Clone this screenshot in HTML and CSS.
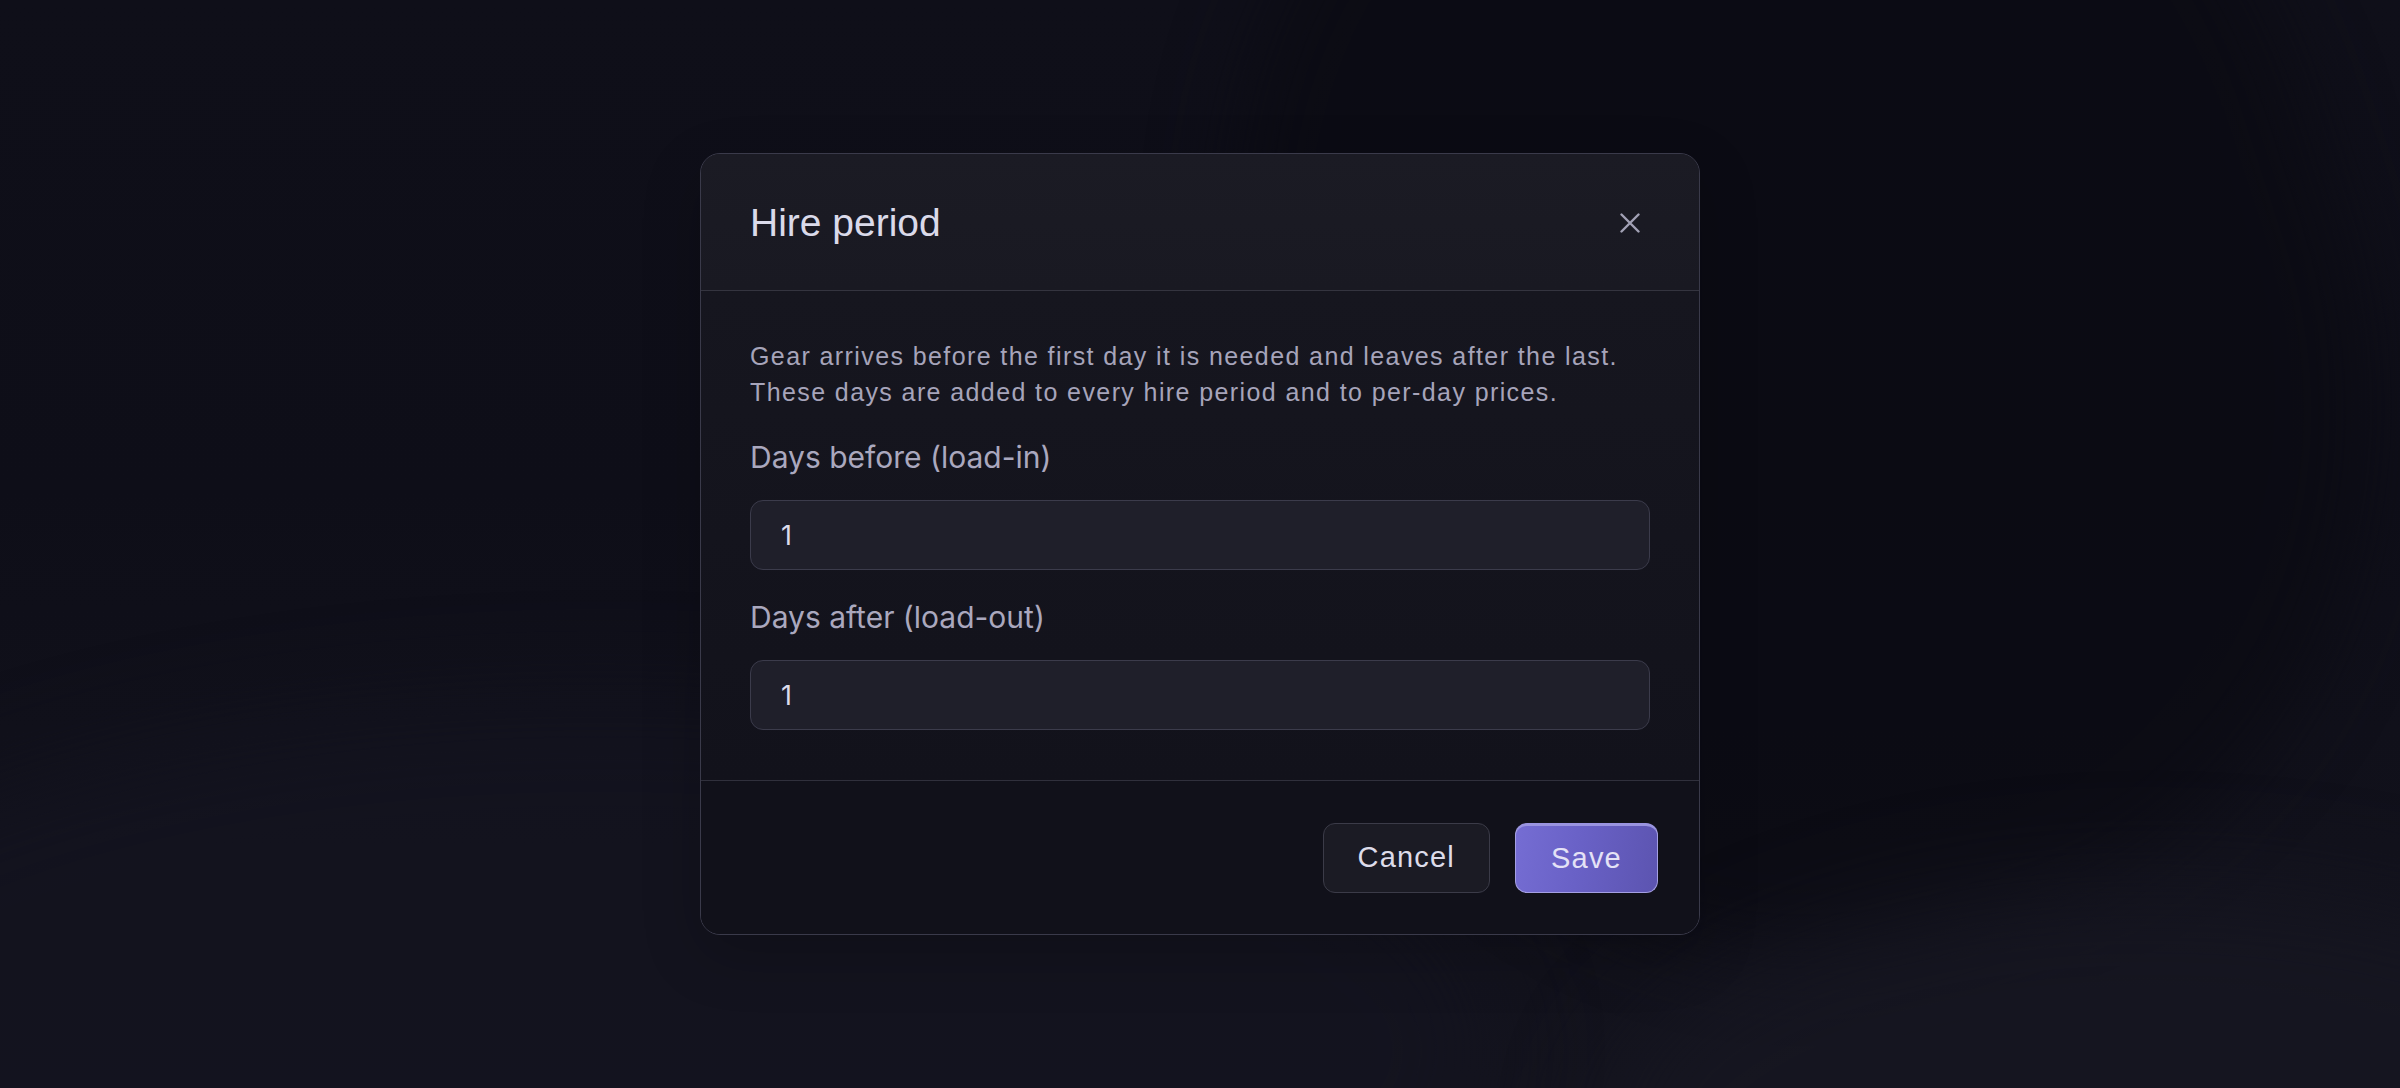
FILE: index.html
```html
<!DOCTYPE html>
<html lang="en">
<head>
<meta charset="utf-8">
<title>Hire period</title>
<link rel="stylesheet" href="styles.css">
</head>
<body>
<div class="backdrop">
  <div class="bg-shape bg-shape-dark"></div>
  <div class="bg-shape bg-shape-light"></div>
  <div class="bg-shape bg-shape-light2"></div>
  <div class="modal" role="dialog" aria-labelledby="mtitle">
    <div class="modal-header">
      <h2 class="modal-title" id="mtitle">Hire period</h2>
      <button class="close-btn" aria-label="Close">
        <svg width="20" height="20" viewBox="0 0 20 20" fill="none" stroke="currentColor" stroke-width="2.4" stroke-linecap="round"><path d="M1.5 1.5L18.5 18.5M18.5 1.5L1.5 18.5"/></svg>
      </button>
    </div>
    <div class="modal-body">
      <p class="desc">Gear arrives before the first day it is needed and leaves after the last.<br>These days are added to every hire period and to per-day prices.</p>
      <div class="field">
        <label class="field-label" for="before">Days before (load-in)</label>
        <input class="field-input" id="before" type="text" value="1">
      </div>
      <div class="field">
        <label class="field-label" for="after">Days after (load-out)</label>
        <input class="field-input" id="after" type="text" value="1">
      </div>
    </div>
    <div class="modal-footer">
      <button class="btn btn-secondary">Cancel</button>
      <button class="btn btn-primary">Save</button>
    </div>
  </div>
</div>
</body>
</html>
```
FILE: styles.css
```css
* { box-sizing: border-box; }
html, body { margin: 0; padding: 0; }
body {
  width: 2400px;
  height: 1088px;
  overflow: hidden;
  font-family: "Liberation Sans", Arial, sans-serif;
  background: linear-gradient(180deg, #0f0f19 0%, #0e0e18 45%, #13131d 100%);
}
.backdrop {
  position: relative;
  width: 2400px;
  height: 1088px;
  display: flex;
  align-items: center;
  justify-content: center;
  overflow: hidden;
}
.bg-shape {
  position: absolute;
  pointer-events: none;
}
.bg-shape-dark {
  left: 1250px;
  top: -300px;
  width: 1100px;
  height: 1250px;
  border-radius: 45%;
  background: #0b0b13;
  transform: rotate(-18deg);
  filter: blur(40px);
  opacity: 0.8;
}
.bg-shape-light {
  left: -300px;
  top: 700px;
  width: 1800px;
  height: 700px;
  border-radius: 50%;
  background: #141420;
  filter: blur(50px);
  opacity: 0.7;
}
.bg-shape-light2 {
  left: 1600px;
  top: 880px;
  width: 1100px;
  height: 500px;
  border-radius: 50%;
  background: #171722;
  filter: blur(50px);
  opacity: 0.7;
}
.modal {
  position: relative;
  z-index: 1;
  width: 1000px;
  border: 1px solid #3a3a4a;
  border-radius: 20px;
  background: linear-gradient(180deg, #191922 0%, #15151f 40%, #11111a 100%);
  box-shadow: 0 20px 60px rgba(0,0,0,0.2);
  overflow: hidden;
}
.modal-header {
  height: 137px;
  border-bottom: 1px solid #34343f;
  display: flex;
  align-items: center;
  justify-content: space-between;
  padding: 2px 59px 0 49px;
  background: linear-gradient(180deg, #1b1b24, #191922);
}
.modal-title {
  margin: 0;
  font-weight: 400;
  font-size: 39px;
  color: #dadaea;
}
.close-btn {
  background: none;
  border: 0;
  padding: 0;
  width: 20px;
  height: 20px;
  color: #a2a1b5;
  display: flex;
  cursor: pointer;
}
.modal-body {
  padding: 47px 49px 50px;
  border-bottom: 1px solid #30303c;
  display: flex;
  flex-direction: column;
  gap: 30px;
  background: linear-gradient(180deg, #16161f, #12121b);
}
.desc {
  margin: 0;
  font-size: 25px;
  line-height: 36px;
  letter-spacing: 1.4px;
  color: #a6a4ba;
}
.field {
  display: flex;
  flex-direction: column;
  gap: 26px;
}
.field-label {
  font-family: Inter, "Noto Sans", sans-serif;
  font-size: 30px;
  line-height: 34px;
  color: #aaa8be;
}
.field-input {
  height: 70px;
  width: 100%;
  border: 1px solid #3b3b4b;
  border-radius: 13px;
  background: #1f1f2a;
  padding: 0 30px;
  font-family: Inter, "Noto Sans", sans-serif;
  font-size: 27px;
  color: #dcdcea;
  outline: none;
}
.modal-footer {
  height: 153px;
  display: flex;
  align-items: center;
  justify-content: flex-end;
  gap: 25px;
  padding: 0 41px 0 49px;
  background: #11111a;
}
.btn {
  height: 70px;
  border-radius: 12px;
  font-family: "Liberation Sans", Arial, sans-serif;
  font-size: 29px;
  letter-spacing: 1.2px;
  padding: 0 34px;
  cursor: pointer;
}
.btn-secondary {
  background: #1b1b24;
  border: 1px solid #3b3b48;
  color: #dddcea;
}
.btn-primary {
  width: 143px;
  background: linear-gradient(100deg, #756dd3 0%, #6961c6 45%, #5c54b0 100%);
  border: 1px solid #a49fe2;
  border-top: 3px solid #9a94e0;
  color: #e4e2f6;
}
```
